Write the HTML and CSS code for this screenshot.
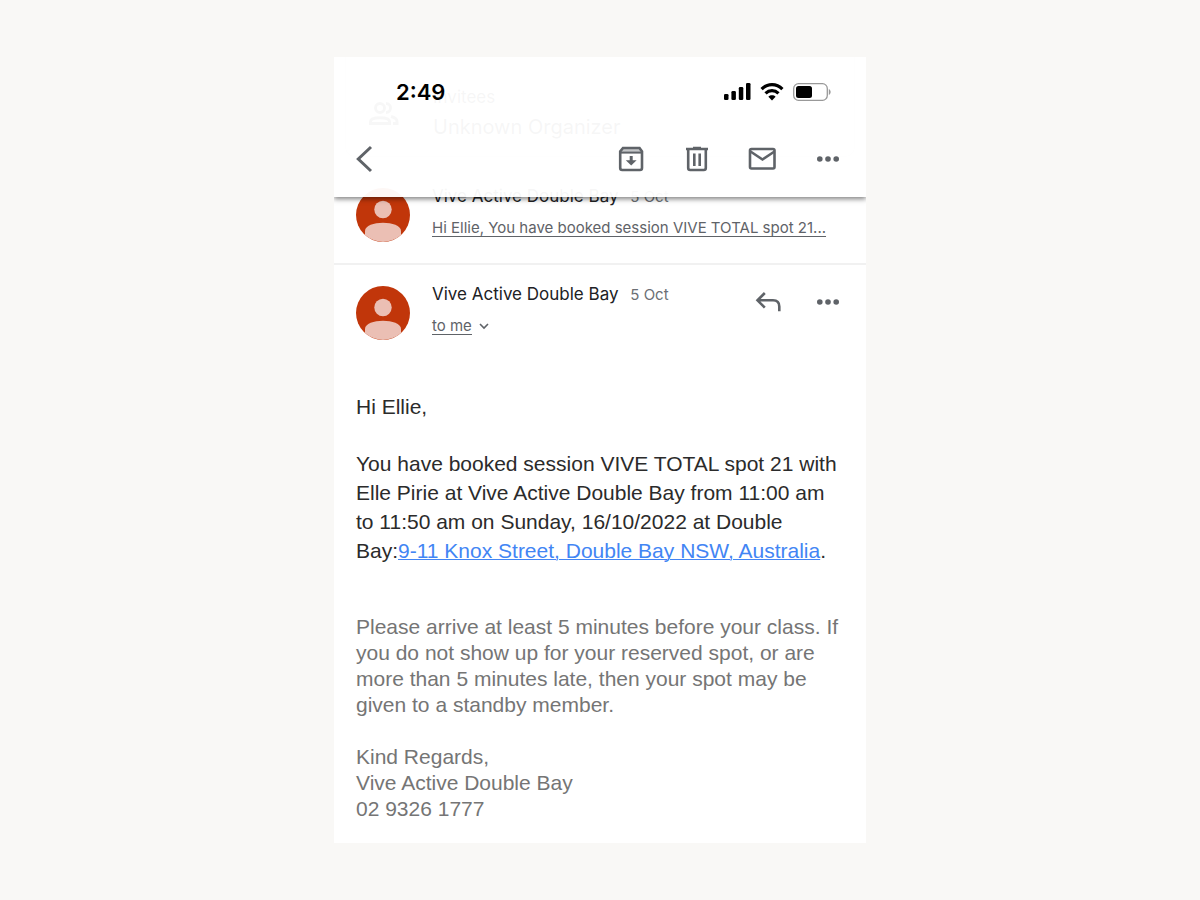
FILE: index.html
```html
<!DOCTYPE html>
<html lang="en">
<head>
    <meta charset="UTF-8">
    <meta name="viewport" content="width=device-width, initial-scale=1.0">
    <title>Vive Active Double Bay</title>
    <link rel="stylesheet" href="styles.css">
</head>
<body>
    <main class="phone">
        <header class="top">
            <div class="status">
                <span class="time">2:49</span>
                <div class="status-icons">
                    <svg width="27" height="18" viewBox="0 0 27 18">
                        <rect x="0" y="11" width="4.5" height="6" rx="1.3"/>
                        <rect x="7.4" y="8" width="4.5" height="9" rx="1.3"/>
                        <rect x="14.8" y="4" width="4.5" height="13" rx="1.3"/>
                        <rect x="22" y="0" width="4.5" height="17" rx="1.3"/>
                    </svg>
                    <svg width="24" height="18" viewBox="0 0 24 18" fill="none" stroke="#000" stroke-width="3.2">
                        <path d="M1.6 6.2C7.5.2 16.5.2 22.4 6.2"/>
                        <path d="M5.5 10.4c3.8-3.6 9.2-3.6 13 0"/>
                        <path d="M12 17.4l-3.6-3.7c1.9-1.9 5.3-1.9 7.2 0z" fill="#000" stroke="none"/>
                    </svg>
                    <svg width="38" height="18" viewBox="0 0 38 18">
                        <rect x=".7" y=".7" width="33.6" height="16.6" rx="4.8" fill="none" stroke="#999" stroke-width="1.3"/>
                        <rect x="3" y="3" width="16" height="12" rx="2.5"/>
                        <path d="M35.8 6v6c2.4-1 2.4-5 0-6z" fill="#999"/>
                    </svg>
                </div>
            </div>
            <div class="toolbar">
                <button type="button" class="icon-button back" aria-label="Back">
                    <svg width="28" height="28" viewBox="0 0 28 28"><path d="M15 2L2.3 14 15 26" stroke-width="3"/></svg>
                </button>
                <button type="button" class="icon-button" aria-label="Archive">
                    <svg width="28" height="28" viewBox="0 0 28 28">
                        <path d="M7 3h17l3 4H4z" fill="#c4c6c8" stroke="none"/>
                        <path d="M7 3h16.500l2.500 3.500V23a2 2 0 0 1-2 2H6.200a2 2 0 0 1-2-2V6.500z"/>
                        <path d="M4.500 7.600h21.500" stroke-width="2"/>
                        <path d="M15.200 11v7" stroke-width="3"/>
                        <path d="M9.800 15.200l5.400 5.400 5.400-5.400z" fill="#5f6368" stroke="none"/>
                    </svg>
                </button>
                <button type="button" class="icon-button" aria-label="Delete">
                    <svg width="28" height="28" viewBox="0 0 28 28">
                        <path d="M4 4h22M11 3h8"/>
                        <path d="M6.200 5v18a2 2 0 0 0 2 2h13.600a2 2 0 0 0 2-2V5"/>
                        <path d="M12.300 8.500v12.500M17.700 8.500v12.500"/>
                    </svg>
                </button>
                <button type="button" class="icon-button" aria-label="Mark unread">
                    <svg width="28" height="28" viewBox="0 0 28 28">
                        <rect x="2" y="4" width="24.500" height="19.500" rx="1.500"/>
                        <path d="M2.500 6.500l12 8 12-8"/>
                    </svg>
                </button>
                <button type="button" class="icon-button" aria-label="More">
                    <svg class="dots" width="28" height="28" viewBox="0 0 28 28"><circle cx="5.800" cy="14" r="2.800"/><circle cx="14" cy="14" r="2.800"/><circle cx="22.200" cy="14" r="2.800"/></svg>
                </button>
            </div>
        </header>

        <!-- calendar card scrolled under the header -->
        <section class="event">
            <svg width="32" height="24" viewBox="0 0 32 24" fill="none" stroke="#444" stroke-width="3">
                <circle cx="12" cy="6" r="4.500"/>
                <path d="M2.500 21.500v-2c0-5 19-5 19 0v2z"/>
                <path d="M18 1.500c6 0 6 9 0 9M23 14.500c4 1 6 2.500 6 5v2h-4"/>
            </svg>
            <div class="event-text">
                <p class="event-label">Invitees</p>
                <p class="event-name">Unknown Organizer</p>
            </div>
        </section>

        <article class="message">
            <svg class="avatar" width="54" height="54" viewBox="0 0 54 54">
                <circle cx="27" cy="27" r="27" fill="#c1360a"/>
                <circle cx="27" cy="21.500" r="8.700" fill="#ebbfb4"/>
                <path d="M9 47v-4c0-11 36-11 36 0v4a27 27 0 0 1-36 0z" fill="#ebbfb4"/>
            </svg>
            <div class="info">
                <p class="sender">Vive Active Double Bay <span class="date">5 Oct</span></p>
                <a class="snippet" href="#">Hi Ellie, You have booked session VIVE TOTAL spot 21...</a>
            </div>
        </article>

        <article class="message open">
            <svg class="avatar" width="54" height="54" viewBox="0 0 54 54">
                <circle cx="27" cy="27" r="27" fill="#c1360a"/>
                <circle cx="27" cy="21.500" r="8.700" fill="#ebbfb4"/>
                <path d="M9 47v-4c0-11 36-11 36 0v4a27 27 0 0 1-36 0z" fill="#ebbfb4"/>
            </svg>
            <div class="info">
                <p class="sender">Vive Active Double Bay <span class="date">5 Oct</span></p>
                <button type="button" class="recipient"><span>to me</span>
                    <svg width="10" height="8" viewBox="0 0 10 8" fill="none" stroke="#5f6368" stroke-width="1.600"><path d="M1 2l4 4 4-4"/></svg>
                </button>
            </div>
            <div class="actions">
                <button type="button" class="icon-button" aria-label="Reply">
                    <svg width="28" height="28" viewBox="0 0 28 28"><path d="M10.800 5L3.500 12.300l7.300 7.300M3.500 12.300h15.500q6.300 0 6.300 6.300v4.700"/></svg>
                </button>
                <button type="button" class="icon-button" aria-label="More">
                    <svg class="dots" width="28" height="28" viewBox="0 0 28 28"><circle cx="5.800" cy="14" r="2.800"/><circle cx="14" cy="14" r="2.800"/><circle cx="22.200" cy="14" r="2.800"/></svg>
                </button>
            </div>
        </article>

        <div class="mail-body">
            <p>Hi Ellie,</p>
            <p>You have booked session VIVE TOTAL spot 21 with<br>
                Elle Pirie at Vive Active Double Bay from 11:00 am<br>
                to 11:50 am on Sunday, 16/10/2022 at Double<br>
                Bay:<a href="#">9-11 Knox Street, Double Bay NSW, Australia</a>.</p>
            <div class="note">
                <p>Please arrive at least 5 minutes before your class. If<br>
                    you do not show up for your reserved spot, or are<br>
                    more than 5 minutes late, then your spot may be<br>
                    given to a standby member.</p>
                <p>Kind Regards,<br>
                    Vive Active Double Bay<br>
                    02 9326 1777</p>
            </div>
        </div>
    </main>
</body>
</html>
```
FILE: styles.css
```css
* {
    box-sizing: border-box;
}

body {
    margin: 0;
    min-height: 100vh;
    display: flex;
    justify-content: center;
    align-items: center;
    background-color: #f9f8f6;
    font-family: Inter, sans-serif;
    color: #202124;
}

p {
    margin: 0;
}

button {
    padding: 0;
    border: none;
    background: none;
    font-family: inherit;
    cursor: pointer;
}

svg {
    display: block;
    flex-shrink: 0;
}

.phone {
    position: relative;
    width: 100%;
    max-width: 532px;
    overflow: hidden;
    background-color: #fff;
}

/* header lies over the scrolled mail */
.top {
    position: absolute;
    top: 0;
    left: 0;
    right: 0;
    padding-bottom: 6px;
    background-color: rgba(255, 255, 255, 0.96);
    box-shadow: 0 2px 5px rgba(0, 0, 0, 0.5);
}

.status {
    display: flex;
    justify-content: space-between;
    align-items: center;
    height: 70px;
    padding: 0 35px 0 62px;
}

.time {
    font-size: 22px;
    font-weight: 600;
    color: #000;
}

.status-icons {
    display: flex;
    align-items: center;
    gap: 9px;
}

.toolbar {
    display: flex;
    align-items: center;
    gap: 38px;
    height: 64px;
    padding: 0 24px 0 22px;
}

.back {
    margin-right: auto;
}

.icon-button svg {
    fill: none;
    stroke: #5f6368;
    stroke-width: 2.6;
}

.icon-button .dots {
    fill: #5f6368;
    stroke: none;
}

.event {
    display: flex;
    align-items: flex-start;
    gap: 33px;
    height: 100px;
    margin: 0 11px 10px;
    padding: 0 22px;
    border: 1px solid #dadce0;
    border-top: none;
    border-radius: 0 0 10px 10px;
}

.event svg {
    margin-top: 45px;
}

.event-text {
    padding-top: 30px;
}

.event-label {
    font-size: 17px;
    line-height: 20px;
}

.event-name {
    margin-top: 8px;
    font-size: 20px;
    line-height: 24px;
}

.message {
    display: flex;
    align-items: flex-start;
    gap: 22px;
    padding: 21px 24px 21px 22px;
    border-bottom: 2px solid #f1f1f1;
}

.open {
    border-bottom: none;
}

.info {
    display: flex;
    flex-direction: column;
    align-items: flex-start;
    gap: 15px;
}

.sender {
    font-size: 17px;
    line-height: 16px;
}

.date {
    margin-left: 7px;
    font-size: 15px;
    color: #6b6f74;
}

.snippet,
.recipient {
    font-size: 15px;
    line-height: 16px;
    color: #5f6368;
    text-decoration: underline;
    text-underline-offset: 3px;
    white-space: nowrap;
}

.recipient {
    display: flex;
    align-items: center;
    gap: 7px;
}

.recipient span {
    text-decoration: underline;
    text-underline-offset: 3px;
}

.actions {
    display: flex;
    gap: 32px;
    margin-left: auto;
    padding-top: 2px;
}

.mail-body {
    padding: 31px 22px 21px;
    font-family: "Liberation Sans", Arial, sans-serif;
    font-size: 21px;
    line-height: 29px;
    color: #2b2b2b;
}

.mail-body p + p {
    margin-top: 28px;
}

.mail-body a {
    color: #4285f4;
    text-decoration-thickness: 1px;
}

.note {
    margin-top: 49px;
    line-height: 26px;
    color: #757575;
}

.mail-body .note p + p {
    margin-top: 26px;
}
```
